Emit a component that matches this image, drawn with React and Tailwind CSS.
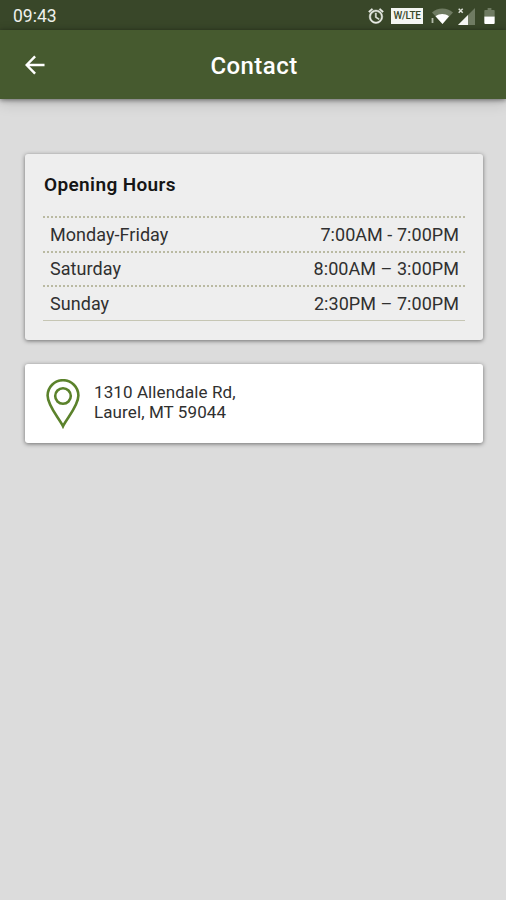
import React from 'react';

const openingHours = [
    { day: 'Monday-Friday', time: '7:00AM - 7:00PM' },
    { day: 'Saturday', time: '8:00AM – 3:00PM' },
    { day: 'Sunday', time: '2:30PM – 7:00PM' }
];

const StatusIcons = () => (
    <div className="flex items-center pb-px">
        {/* Alarm */}
        <svg className="w-[18px] h-[18px]" viewBox="0 0 24 24" fill="#e9ece6" stroke="#e9ece6" strokeWidth="0.6">
            <path d="M22 5.72l-4.6-3.86-1.29 1.53 4.6 3.86L22 5.72zM7.88 3.39L6.6 1.86 2 5.71l1.29 1.53 4.59-3.85zM12.5 8H11v6l4.75 2.85.75-1.23-4-2.37V8zM12 4c-4.97 0-9 4.03-9 9s4.02 9 9 9a9 9 0 0 0 0-18zm0 16c-3.87 0-7-3.13-7-7s3.13-7 7-7 7 3.13 7 7-3.13 7-7 7z" />
        </svg>
        {/* Vo/WiFi LTE label */}
        <div className="ml-[6px] flex h-4 w-[32px] items-center justify-center bg-[#f4f6f2] text-[10px] font-medium leading-none tracking-[-0.3px] text-[#394729]">
            W/LTE
        </div>
        {/* Wifi */}
        <svg className="ml-[8px] w-[22px] h-[16px]" viewBox="0 0 22 16">
            <path d="M1 4.5C6.5-.8 16-.8 22 4.5L11.5 16z" fill="#6f7b62" />
            <path d="M4.500 8.3c4-3.2 9.500-3.2 13.500 0L11.500 16z" fill="#fff" />
            <path d="M1.500 10v5" stroke="#b3baaa" strokeWidth="1.8" fill="none" />
        </svg>
        {/* Mobile signal */}
        <svg className="ml-[5px] w-[17px] h-[17px]" viewBox="0 0 17 17">
            <path d="M17 0v17H0z" fill="#6f7b62" />
            <path d="M10 7v10H0z" fill="#f4f6f2" />
            <path d="M0.7 0.7l4 4M4.7 0.7l-4 4" stroke="#dfe3da" strokeWidth="1.5" />
        </svg>
        {/* Battery */}
        <svg className="ml-[9px] w-[11px] h-[16px]" viewBox="0 0 11 17">
            <path d="M3.500 0h4v2H10a1 1 0 0 1 1 1v6H0V3a1 1 0 0 1 1-1h2.500z" fill="#6f7b62" />
            <path d="M0 9h11v7a1 1 0 0 1-1 1H1a1 1 0 0 1-1-1z" fill="#fff" />
        </svg>
    </div>
);

const Header = () => (
    <header className="h-[69px] bg-[#465a2f] shadow-[0_1px_5px_rgba(0,0,0,0.5),0_4px_14px_rgba(0,0,0,0.14)]">
        <div className="grid h-full grid-cols-[1fr_auto_1fr] items-center pl-[25px] pr-[23px]">
            <button aria-label="Back">
                <svg className="w-[20px] h-[20px]" viewBox="0 0 21 20" fill="none" stroke="#fff" strokeWidth="2.6">
                    <path d="M20.5 10H2M10.6 1L1.7 10l8.9 9" />
                </svg>
            </button>
            <h1 className="pt-[2px] text-[24px] font-medium leading-7 tracking-[0.45px] text-white">Contact</h1>
        </div>
    </header>
);

const App = () => {
    return (
        <div className="min-h-screen bg-[#dcdcdc] font-['Roboto',sans-serif] text-[#303030]">
            {/* STATUS BAR */}
            <div className="flex h-[30px] items-center justify-between bg-[#394729] pl-[13px] pr-[11px] pt-[3px]">
                <span className="text-[17.5px] leading-none text-[#eef0ec]">09:43</span>
                <StatusIcons />
            </div>

            <Header />

            <main className="flex flex-col gap-6 pl-[25px] pt-[55px] pr-[23px]">
                {/* OPENING HOURS */}
                <section className="h-[186px] rounded-[3px] bg-[#eeeeee] px-[18px] pt-[19px] shadow-[0_1px_4px_rgba(0,0,0,0.5)]">
                    <h2 className="pl-px text-[19px] font-semibold leading-6 tracking-[0.37px] text-[#151515]">Opening Hours</h2>
                    <div className="mt-[19px] border-b border-[#c6c6b4]">
                        {openingHours.map((row) => (
                            <div
                                key={row.day}
                                className="flex h-[34.6px] items-center justify-between border-t-2 border-dotted border-[#babaa2] pl-[7px] pr-[6px] text-[18px] tracking-[0.05px]"
                            >
                                <span>{row.day}</span>
                                <span>{row.time}</span>
                            </div>
                        ))}
                    </div>
                </section>

                {/* ADDRESS */}
                <section className="flex h-[79px] items-center rounded-[3px] bg-white pl-[21px] shadow-[0_1px_4px_rgba(0,0,0,0.5)]">
                    <svg className="mt-px w-[34px] h-[50px]" viewBox="0 0 34 50" fill="none" stroke="#5b822b" strokeWidth="2.6">
                        <path d="M17 47.3C13 39 1.6 27 1.6 16.6a15.4 15.4 0 0 1 30.8 0C32.4 27 21 39 17 47.3z" />
                        <circle cx="17" cy="17" r="7.8" />
                    </svg>
                    <p className="ml-[14px] pb-[4px] text-[17px] leading-5 tracking-[0.1px]">
                        1310 Allendale Rd,
                        <br />
                        Laurel, MT 59044
                    </p>
                </section>
            </main>
        </div>
    );
};

export default App;
